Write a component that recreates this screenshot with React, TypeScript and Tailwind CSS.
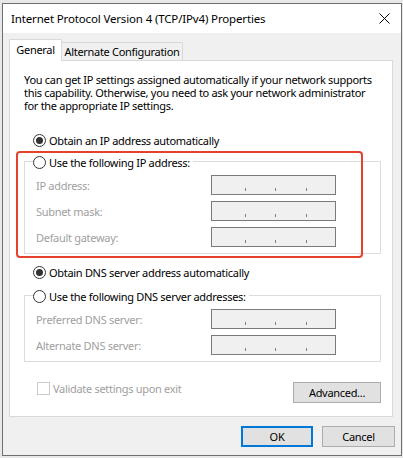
import React from 'react';

const font = { fontFamily: '"Noto Sans", "Liberation Sans", sans-serif' };

function Radio({ checked }: { checked?: boolean }) {
  return (
    <span className="flex h-[13px] w-[13px] shrink-0 items-center justify-center rounded-full border border-[#333] bg-white">
      {checked && <span className="h-[7px] w-[7px] rounded-full bg-[#333]" />}
    </span>
  );
}

function IpBox() {
  return (
    <div className="flex h-[20px] w-[125px] items-end border border-[#7a7a7a] bg-[#f0f0f0] pb-[3px]">
      <span className="ml-[33px] h-[3px] w-px bg-[#808080]" />
      <span className="ml-[29px] h-[3px] w-px bg-[#808080]" />
      <span className="ml-[30px] h-[3px] w-px bg-[#808080]" />
    </div>
  );
}

function FieldRow({ label }: { label: string }) {
  return (
    <div className="flex h-[20px] items-center">
      <span className="w-[175px] text-[#a0a0a0]">{label}</span>
      <IpBox />
    </div>
  );
}

function Group({ legend, rows }: { legend: string; rows: string[] }) {
  return (
    <div className="relative ml-[14px] mr-[11px] border border-[#dcdcdc] pb-[6px] pl-[11px] pt-[13px]">
      <div className="absolute left-[8px] top-[-8px] flex h-[16px] items-center gap-[3px] bg-white pr-[3px]">
        <Radio />
        <span>{legend}</span>
      </div>
      <div className="flex flex-col gap-[6px]">
        {rows.map((r) => (
          <FieldRow key={r} label={r} />
        ))}
      </div>
    </div>
  );
}

export default function App() {
  return (
    <div
      className="h-[458px] w-[403px] overflow-hidden bg-[#e8e8e8] pl-[2px] pt-[3px] text-[11px] leading-[13px] tracking-[-0.3px] text-black"
      style={font}
    >
      <div className="flex h-[453px] w-[400px] flex-col border border-[#6f6f6f] bg-[#f0f0f0]">
        {/* title bar */}
        <div className="flex h-[29px] shrink-0 items-center justify-between bg-white pl-[8px] pr-[9px]">
          <span className="text-[11.5px] tracking-[-0.15px]">Internet Protocol Version 4 (TCP/IPv4) Properties</span>
          <svg width="11" height="11" viewBox="0 0 11 11" className="mr-[2px]">
            <path d="M0.5 0.5 L10.5 10.5 M10.5 0.5 L0.5 10.5" stroke="#000" strokeWidth="1" />
          </svg>
        </div>

        {/* tabs */}
        <div className="relative ml-[6px] mt-[6px] flex h-[21px] items-end">
          <div className="relative z-10 -mb-px flex h-[22px] w-[53px] items-center justify-center whitespace-nowrap border border-b-0 border-[#d9d9d9] bg-white pb-[2px]">
            General
          </div>
          <div className="flex h-[18px] w-[121px] items-center justify-center whitespace-nowrap border border-b-0 border-l-0 border-[#d9d9d9] bg-[#f0f0f0]">
            Alternate Configuration
          </div>
        </div>

        {/* panel */}
        <div className="relative ml-[6px] h-[357px] w-[384px] border border-[#d9d9d9] bg-white">
          <p className="ml-[14px] mt-[12px] w-[355px]">
            You can get IP settings assigned automatically if your network supports this capability. Otherwise, you need to ask your network administrator for the appropriate IP settings.
          </p>

          <div className="ml-[23px] mt-[20px] flex h-[16px] items-center gap-[3px]">
            <Radio checked />
            <span>Obtain an IP address automatically</span>
          </div>

          <div className="mt-[13px]">
            <Group legend="Use the following IP address:" rows={['IP address:', 'Subnet mask:', 'Default gateway:']} />
          </div>

          <div className="ml-[23px] mt-[10px] flex h-[16px] items-center gap-[3px]">
            <Radio checked />
            <span>Obtain DNS server address automatically</span>
          </div>

          <div className="mt-[15px]">
            <Group legend="Use the following DNS server addresses:" rows={['Preferred DNS server:', 'Alternate DNS server:']} />
          </div>

          <div className="ml-[27px] mr-[11px] mt-[19px] flex items-start justify-between">
            <div className="mt-px flex items-center gap-[3px] text-[#a0a0a0]">
              <span className="h-[13px] w-[13px] border border-[#cccccc] bg-white" />
              <span>Validate settings upon exit</span>
            </div>
            <button className="mt-px h-[21px] w-[88px] border border-[#adadad] bg-[#e1e1e1]">Advanced...</button>
          </div>

          {/* highlight */}
          <div className="pointer-events-none absolute left-[6px] top-[90px] h-[107px] w-[347px] rounded-[4px] border-2 border-[#e5412d]" />
        </div>

        {/* footer buttons */}
        <div className="mt-[9px] flex justify-end gap-[9px] pr-[6px]">
          <button className="h-[21px] w-[72px] border-2 border-[#0078d7] bg-[#e1e1e1]">OK</button>
          <button className="h-[21px] w-[73px] border border-[#adadad] bg-[#e1e1e1]">Cancel</button>
        </div>
      </div>
    </div>
  );
}
